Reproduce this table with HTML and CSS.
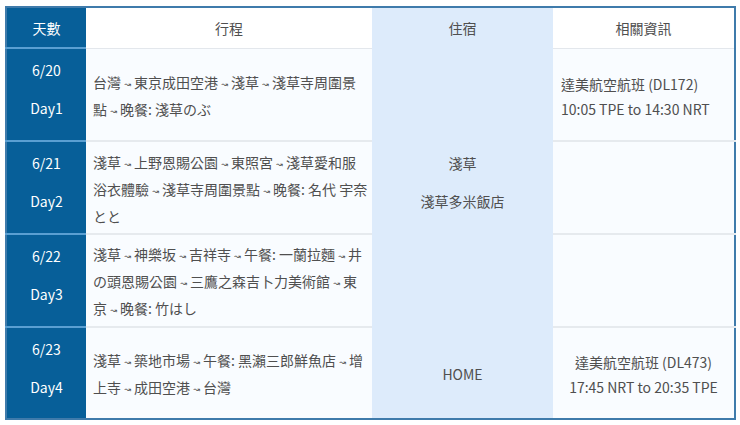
FILE: index.html
```html
<!DOCTYPE html>
<html lang="zh-Hant">
<head>
<meta charset="utf-8">
<link rel="stylesheet" href="styles.css">
</head>
<body>
<div class="wrap">
<table class="trip">
  <colgroup>
    <col class="c-day"><col class="c-plan"><col class="c-stay"><col class="c-info">
  </colgroup>
  <thead>
    <tr>
      <th class="day">天數</th>
      <th>行程</th>
      <th class="stay">住宿</th>
      <th>相關資訊</th>
    </tr>
  </thead>
  <tbody>
    <tr>
      <td class="day"><div class="dd"><span>6/20</span><span>Day1</span></div></td>
      <td class="plan">台灣 <span class="ar">↝</span> 東京成田空港 <span class="ar">↝</span> 淺草 <span class="ar">↝</span> 淺草寺周圍景點 <span class="ar">↝</span> 晚餐: 淺草のぶ</td>
      <td class="stay" rowspan="3"><div class="dd"><span>淺草</span><span>淺草多米飯店</span></div></td>
      <td class="info">達美航空航班 (DL172)<br>10:05 TPE to 14:30 NRT</td>
    </tr>
    <tr>
      <td class="day"><div class="dd"><span>6/21</span><span>Day2</span></div></td>
      <td class="plan">淺草 <span class="ar">↝</span> 上野恩賜公園 <span class="ar">↝</span> 東照宮 <span class="ar">↝</span> 淺草愛和服浴衣體驗 <span class="ar">↝</span> 淺草寺周圍景點 <span class="ar">↝</span> 晚餐: 名代 宇奈とと</td>
      <td class="info"></td>
    </tr>
    <tr>
      <td class="day"><div class="dd"><span>6/22</span><span>Day3</span></div></td>
      <td class="plan">淺草 <span class="ar">↝</span> 神樂坂 <span class="ar">↝</span> 吉祥寺 <span class="ar">↝</span> 午餐: 一蘭拉麵 <span class="ar">↝</span> 井の頭恩賜公園 <span class="ar">↝</span> 三鷹之森吉卜力美術館 <span class="ar">↝</span> 東京 <span class="ar">↝</span> 晚餐: 竹はし</td>
      <td class="info"></td>
    </tr>
    <tr>
      <td class="day"><div class="dd"><span>6/23</span><span>Day4</span></div></td>
      <td class="plan">淺草 <span class="ar">↝</span> 築地市場 <span class="ar">↝</span> 午餐: 黑瀨三郎鮮魚店 <span class="ar">↝</span> 增上寺 <span class="ar">↝</span> 成田空港 <span class="ar">↝</span> 台灣</td>
      <td class="stay home">HOME</td>
      <td class="info center">達美航空航班 (DL473)<br>17:45 NRT to 20:35 TPE</td>
    </tr>
  </tbody>
</table>
</div>
</body>
</html>
```

FILE: styles.css
```css
html, body {
  margin: 0;
  padding: 0;
  background: #ffffff;
}
.wrap {
  padding: 6px 4px 0 5px;
}
.trip {
  width: 731px;
  border-collapse: collapse;
  table-layout: fixed;
  border: 2px solid #3f7bab;
  font-family: "Noto Sans CJK TC", "Noto Sans", sans-serif;
  font-size: 14px;
  color: #4f4f4f;
}
.c-day { width: 80px; }
.c-plan { width: 286px; }
.c-stay { width: 181px; }
.c-info { width: auto; }
.trip th {
  height: 39px;
  padding: 0;
  font-weight: normal;
  background: #ffffff;
  text-align: center;
  border-bottom: 1px solid #e3e7ec;
}
.trip td {
  height: 86px;
  padding: 5px 0 0 0;
  background: #f9fcff;
  border-bottom: 2px solid #e6eaee;
  line-height: 25px;
  vertical-align: middle;
}
.trip tbody tr:last-child td {
  border-bottom: none;
  height: 85px;
}
.trip .day {
  background: #075f99;
  color: #ffffff;
  text-align: center;
  padding-top: 0;
  border-bottom: 2px solid #5a9fd2;
}
.trip th.day {
  border-bottom: 2px solid #5a9fd2;
}
.trip .stay {
  background: #ddebfb;
  text-align: center;
  padding-top: 0;
  border-bottom: none;
}
.trip th.stay {
  background: #ddebfb;
  border-bottom: none;
}
.trip td.home {
  padding-top: 5px;
}
.trip td.plan {
  padding-left: 7px;
  padding-right: 3px;
}
.ar {
  font-family: "DejaVu Sans", sans-serif;
  font-size: 8px;
  vertical-align: 1px;
}
.trip td.info {
  padding-left: 8px;
  padding-right: 8px;
}
.info.center {
  text-align: center;
}
.dd {
  display: flex;
  flex-direction: column;
  align-items: center;
  gap: 14px;
  line-height: 24px;
  margin-top: -10px;
}
```
